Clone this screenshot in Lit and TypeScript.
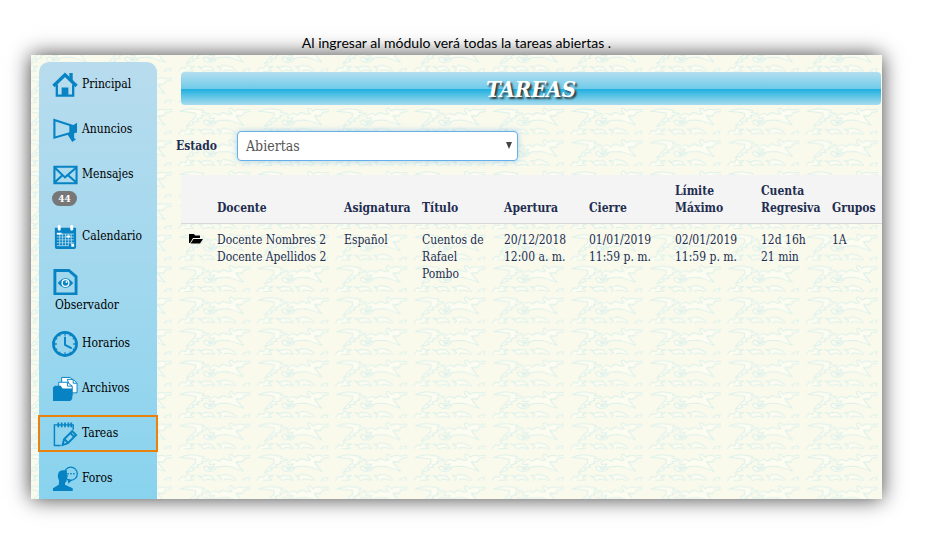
import { LitElement, html, css, svg, nothing } from "lit";
import { customElement, property } from "lit/decorators.js";
import { classMap } from "lit/directives/class-map.js";

const icons: Record<string, unknown> = {
  home: svg`<path d="M5 13v11.500h17V13" fill="none" stroke="currentColor" stroke-width="2.400"/><path d="M1.500 14.500L13.500 3l12 11.500" fill="none" stroke="currentColor" stroke-width="3.400"/><path d="M18 1h3.500v8L18 6zM10 16h7v9h-7z"/>`,
  megaphone: svg`<path d="M2.500 3L21 9v7L2.500 21.500z" fill="none" stroke="currentColor" stroke-width="2.200"/><path d="M18 8l3 1 5-3v10l-3 1v5l2 1-4 3-5-8 2-2z"/>`,
  mail: svg`<path d="M2.500 5h23v17h-23zM3 6l10.500 10L25 6M3 21l7.500-7M25 21l-8-7" fill="none" stroke="currentColor" stroke-width="2.200"/>`,
  calendar: svg`<path d="M3 4h22v20q0 2-2 2H5q-2 0-2-2z"/><g fill="#fff"><rect x="6" y="1" width="3" height="6" rx="1.500"/><rect x="19" y="1" width="3" height="6" rx="1.500"/></g><path d="M5 10.500h18M5 13.500h18M5 16.500h18M5 19.500h18M5 22.500h12M8 10v13M11 10v13M14 10v13M17 10v13M20 10v11" stroke="#a9d8ee" stroke-width=".9" fill="none"/><path d="M5 9h5v2H5zM20 20.500h3v3h-3zM15 12h4v2h-4z" fill="#fff"/>`,
  observer: svg`<path d="M3 1.500h14.500L25 8v18H3z" fill="none" stroke="currentColor" stroke-width="3"/><path d="M6 14.500q8-10 16 0q-8 10-16 0z"/><circle cx="14" cy="14.500" r="4.200" fill="#fff"/><circle cx="14" cy="14.500" r="2.800"/><circle cx="15" cy="13.500" r="1" fill="#fff"/>`,
  clock: svg`<circle cx="13.500" cy="13.500" r="12" fill="none" stroke="currentColor" stroke-width="2.800"/><path d="M13.500 6v8.500l7 3.500" fill="none" stroke="currentColor" stroke-width="2"/><path d="M13.500 2v3M13.500 22v3M2 13.500h3M22 13.500h3M7.500 3.500l1 2M19.500 3.500l-1 2M3.500 7.500l2 1M23.500 7.500l-2 1M3.500 19.500l2-1M23.500 19.500l-2-1M7.500 23.500l1-2M19.500 23.500l-1-2" fill="none" stroke="currentColor" stroke-width="1.300"/>`,
  files: svg`<g fill="#fff" stroke="currentColor" stroke-width="1"><path d="M10 1.500h9l3 3v6H10z"/><path d="M16 3.500h6l4 4v10h-6z"/><path d="M7 6.500h9l5 4v10H7z"/></g><path d="M16 6.500v4h5M22 3.500v4h4" fill="none" stroke="currentColor"/><path d="M1 12l2-2h6l2 3h10v11l-2 2H1z"/>`,
  tasks: svg`<path d="M9 25.500H2.500V4H22v5" fill="none" stroke="currentColor" stroke-width="1.500"/><path d="M6.500 1.500v5M10 1.500v5M13.500 1.500v5M17 1.500v5M20 1.500v5" stroke="currentColor" stroke-width="1.800"/><path d="M11 25l1.500-6L21 10.500l4 4L16.500 23zM13 19l3.500 3.500M19 12.500l4 4" fill="none" stroke="currentColor" stroke-width="2"/>`,
  forum: svg`<circle cx="19.500" cy="8" r="6.800" fill="none" stroke="currentColor" stroke-width="1.300"/><path d="M16 13.500l1 5 4-4"/><path d="M6 11q0-7 6-6.500h3.500v4l1 2-1 2q0 4-2 5v2l8 3.500v3H1v-3l6-3.500q1-4-1-8.500z"/><path d="M16 8h1.500M19 8h1.500M22 8h1.500" stroke="currentColor" stroke-width="1.500"/>`,
};

interface NavEntry {
  icon: string;
  label: string;
  badge?: number;
  stacked?: boolean;
  active?: boolean;
}

const entries: NavEntry[] = [
  { icon: "home", label: "Principal" },
  { icon: "megaphone", label: "Anuncios" },
  { icon: "mail", label: "Mensajes", badge: 44 },
  { icon: "calendar", label: "Calendario" },
  { icon: "observer", label: "Observador", stacked: true },
  { icon: "clock", label: "Horarios" },
  { icon: "files", label: "Archivos" },
  { icon: "tasks", label: "Tareas", active: true },
  { icon: "forum", label: "Foros" },
];

const columns = [
  { key: "open", lines: [] },
  { key: "teacher", lines: ["Docente"] },
  { key: "subject", lines: ["Asignatura"] },
  { key: "title", lines: ["Título"] },
  { key: "start", lines: ["Apertura"] },
  { key: "end", lines: ["Cierre"] },
  { key: "limit", lines: ["Límite", "Máximo"] },
  { key: "countdown", lines: ["Cuenta", "Regresiva"] },
  { key: "groups", lines: ["Grupos"] },
];

const tasks = [
  [
    ["Docente Nombres 2", "Docente Apellidos 2"],
    ["Español"],
    ["Cuentos de", "Rafael", "Pombo"],
    ["20/12/2018", "12:00 a. m."],
    ["01/01/2019", "11:59 p. m."],
    ["02/01/2019", "11:59 p. m."],
    ["12d 16h", "21 min"],
    ["1A"],
  ],
];

const stack = (lines: string[]) => lines.map((l, i) => html`${i ? html`<br />` : nothing}${l}`);

@customElement("nav-item")
class NavItem extends LitElement {
  @property({ attribute: false }) entry!: NavEntry;

  static styles = css`
    :host { display: block; }
    .link {
      display: block;
      padding: 0 0 0 13px;
      color: #000;
      text-decoration: none;
      line-height: 17px;
    }
    .row { display: flex; align-items: center; gap: 4px; height: 37px; }
    .icon { width: 26px; height: 26px; color: #0783c4; fill: currentColor; flex: none; }
    .below { display: block; height: 20px; margin-top: -3px; padding-left: 3px; }
    .badge {
      display: block;
      width: 25px;
      height: 15px;
      margin-bottom: 4px;
      margin-top: -2px;
      border-radius: 8px;
      background: #777;
      color: #fff;
      font-size: 10px;
      font-weight: bold;
      line-height: 15px;
      text-align: center;
    }
    .active { margin: 0 -1px; padding-left: 14px; outline: 2px solid #e8820c; outline-offset: -2px; }
  `;

  render() {
    const e = this.entry;
    return html`<a href="#" class=${classMap({ link: true, active: !!e.active })}>
      <span class="row">
        <svg class="icon" viewBox="0 0 27 27" aria-hidden="true">${icons[e.icon]}</svg>
        ${e.stacked ? nothing : html`<span>${e.label}</span>`}
      </span>
      ${e.stacked ? html`<span class="below">${e.label}</span>` : nothing}
      ${e.badge ? html`<span class="badge">${e.badge}</span>` : nothing}
    </a>`;
  }
}

@customElement("dove-paper")
class DovePaper extends LitElement {
  static styles = css`
    :host { display: block; }
    .paper { display: block; width: 100%; height: 100%; }
  `;

  render() {
    return html`<svg class="paper" aria-hidden="true">
      <defs>
        <pattern id="doves" x="5" y="14" width="235.300" height="94.400" patternUnits="userSpaceOnUse"
          patternTransform="translate(61 12) scale(.3333)">
          <g fill="#fcfcf1" stroke="#dcf0ea" stroke-width="3" stroke-linejoin="round">
            <path d="M24 25Q48 14 68 18L96 22L90 28L112 31Q105 38 88 36L92 42L74 48L80 54L60 56L66 62L42 70L58 52L70 42L71 30Q48 25 24 25z" />
            <path d="M112 38L128 30L140 36L152 28L172 34L180 32L172 24V17L178 15L187 24Q200 14 214 21L240 18Q234 28 218 27L210 38L192 38L202 52L214 66Q192 58 172 52Q146 48 122 58L128 44L112 46z" />
            <path d="M94 54L102 50L108 54L122 52L132 58L124 65L106 66L98 62z" />
            <path d="M108 56L124 58L114 62z" />
            <path d="M12 104L28 82L40 84L46 74L56 80L68 78L54 86L64 92L38 94z" />
            <path d="M76 78L88 82L98 78L118 80L128 93L108 89L94 94L88 86z" />
            <path d="M134 78L146 80L154 75Q188 76 194 98Q174 86 158 90L150 99L138 97L148 88z" />
            <path d="M204 105L212 92L220 86L233 85L228 96L216 94z" />
          </g>
        </pattern>
      </defs>
      <rect width="100%" height="100%" fill="#fafaec" />
      <rect width="100%" height="100%" fill="url(#doves)" />
    </svg>`;
  }
}

@customElement("app-root")
class AppRoot extends LitElement {
  static styles = css`
    :host {
      display: block;
      padding: 34px 56px 43px 31px;
      background: #fff;
      font-family: "DejaVu Serif Condensed", "DejaVu Serif", serif;
      font-size: 12px;
      line-height: 17px;
      color: #1f2d50;
    }
    .caption {
      position: relative;
      z-index: 1;
      margin: 0;
      height: 21px;
      font-family: Lato, "Open Sans", sans-serif;
      font-size: 14px;
      line-height: 18px;
      text-align: center;
      color: #000;
    }
    .panel {
      position: relative;
      display: flex;
      padding: 7px 0 0 8px;
      box-shadow: 0 0 20px rgba(0, 0, 0, 0.75);
    }
    .paper { position: absolute; inset: 0; }
    .sidebar {
      position: relative;
      flex: none;
      width: 118px;
      box-sizing: border-box;
      padding: 4px 0 2px;
      border-radius: 10px 10px 0 0;
      background: linear-gradient(#b8dcee, #89d3ee);
    }
    .list { display: flex; flex-direction: column; gap: 8px; margin: 0; padding: 0; list-style: none; }
    .main { position: relative; flex: 1; min-width: 0; padding: 10px 0 0 19px; }
    .title {
      margin: 0 1px 0 5px;
      height: 33px;
      border-radius: 4px;
      background: linear-gradient(#b4deef, #6fcbea 51%, #1fb0e0 52%, #a9dcee);
      color: #fff;
      font-family: "DejaVu Serif Condensed", "DejaVu Serif", serif;
      font-size: 22px;
      font-style: italic;
      font-weight: bold;
      line-height: 35px;
      text-align: center;
      text-shadow: 2px 2px 2px #333;
    }
    .filter { display: flex; align-items: center; margin-top: 26px; }
    .label { width: 61px; font-weight: bold; }
    .field { position: relative; width: 281px; }
    .select {
      display: block;
      appearance: none;
      width: 100%;
      height: 30px;
      margin: 0;
      padding: 0 24px 0 8px;
      border: 1px solid #66afe9;
      border-radius: 4px;
      outline: 0;
      background: #fff;
      box-shadow: 0 0 6px rgba(102, 175, 233, 0.5);
      color: #555;
      font: inherit;
      font-size: 14px;
    }
    .arrow { position: absolute; right: 5px; top: 11px; width: 8px; height: 8px; fill: #444; pointer-events: none; }
    .table { width: calc(100% - 5px); margin: 14px 0 0 5px; border-collapse: separate; border-spacing: 0; table-layout: fixed; }
    .cell { padding: 8px 0 6px 8px; text-align: left; vertical-align: top; white-space: nowrap; }
    .head { border-bottom: 1px solid #d8d8d8; background: #f4f4f4; font-weight: bold; vertical-align: bottom; }
    .open { width: 28px; }
    .subject { width: 78px; }
    .title-col { width: 82px; }
    .start { width: 85px; }
    .end, .limit { width: 86px; }
    .countdown { width: 71px; }
    .groups { width: 58px; }
    .folder { display: block; margin-top: 1px; width: 14px; height: 12px; color: #000; }
    .folder-button { display: block; padding: 0; border: 0; background: none; }
  `;

  render() {
    return html`
      <p class="caption">Al ingresar al módulo verá todas la tareas abiertas .</p>
      <div class="panel">
        <dove-paper class="paper"></dove-paper>
        <nav class="sidebar">
          <ul class="list">
            ${entries.map((e) => html`<li><nav-item .entry=${e}></nav-item></li>`)}
          </ul>
        </nav>
        <main class="main">
          <h1 class="title">TAREAS</h1>
          <div class="filter">
            <label class="label" for="state">Estado</label>
            <div class="field">
              <select class="select" id="state"><option>Abiertas</option></select>
              <svg class="arrow" viewBox="0 0 8 8" aria-hidden="true"><path d="M1 0h6L4 7z" /></svg>
            </div>
          </div>
          <table class="table">
            <colgroup>
              ${columns.map((c) => html`<col class=${c.key === "title" ? "title-col" : c.key} />`)}
            </colgroup>
            <thead>
              <tr>${columns.map((c) => html`<th class="cell head" scope="col">${stack(c.lines)}</th>`)}</tr>
            </thead>
            <tbody>
              ${tasks.map((row) => html`<tr>
                <td class="cell">
                  <button class="folder-button" aria-label="Abrir">
                    <svg class="folder" viewBox="0 0 14 12"><path d="M0 10V1h5l1 1.500h5V5H4L1 10zM1.500 10.500L4.500 6H14l-3 4.500z" /></svg>
                  </button>
                </td>
                ${row.map((lines) => html`<td class="cell">${stack(lines)}</td>`)}
              </tr>`)}
            </tbody>
          </table>
        </main>
      </div>
    `;
  }
}
